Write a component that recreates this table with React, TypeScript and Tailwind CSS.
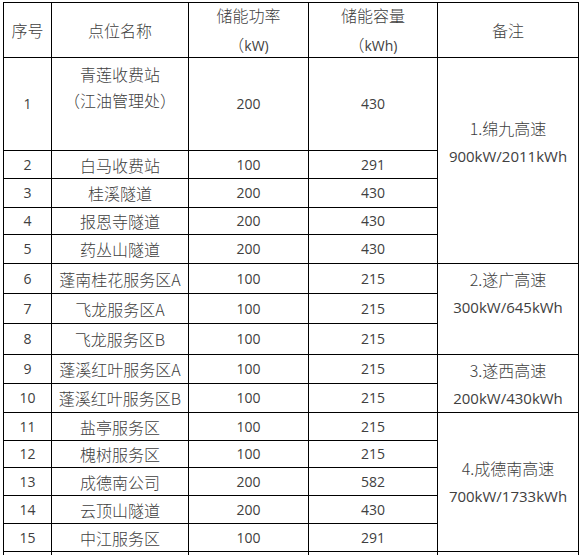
type Row = {
  no: string;
  name: string[];
  power: string;
  capacity: string;
  h: string;
};

type Group = { start: number; span: number; title: string; total: string; pad: string };

const ROWS: Row[] = [
  { no: "1", name: ["青莲收费站", "（江油管理处）"], power: "200", capacity: "430", h: "h-[93px]" },
  { no: "2", name: ["白马收费站"], power: "100", capacity: "291", h: "h-[28px]" },
  { no: "3", name: ["桂溪隧道"], power: "200", capacity: "430", h: "h-[29px]" },
  { no: "4", name: ["报恩寺隧道"], power: "200", capacity: "430", h: "h-[27px]" },
  { no: "5", name: ["药丛山隧道"], power: "200", capacity: "430", h: "h-[29px]" },
  { no: "6", name: ["蓬南桂花服务区A"], power: "100", capacity: "215", h: "h-[30px]" },
  { no: "7", name: ["飞龙服务区A"], power: "100", capacity: "215", h: "h-[30px]" },
  { no: "8", name: ["飞龙服务区B"], power: "100", capacity: "215", h: "h-[31px]" },
  { no: "9", name: ["蓬溪红叶服务区A"], power: "100", capacity: "215", h: "h-[29px]" },
  { no: "10", name: ["蓬溪红叶服务区B"], power: "100", capacity: "215", h: "h-[29px]" },
  { no: "11", name: ["盐亭服务区"], power: "100", capacity: "215", h: "h-[28px]" },
  { no: "12", name: ["槐树服务区"], power: "100", capacity: "215", h: "h-[27px]" },
  { no: "13", name: ["成德南公司"], power: "200", capacity: "582", h: "h-[28px]" },
  { no: "14", name: ["云顶山隧道"], power: "200", capacity: "430", h: "h-[28px]" },
  { no: "15", name: ["中江服务区"], power: "100", capacity: "291", h: "h-[28px]" },
];

const GROUPS: Group[] = [
  { start: 0, span: 5, title: "1.绵九高速", total: "900kW/2011kWh", pad: "pb-[37px]" },
  { start: 5, span: 3, title: "2.遂广高速", total: "300kW/645kWh", pad: "pb-[33px]" },
  { start: 8, span: 2, title: "3.遂西高速", total: "200kW/430kWh", pad: "pb-0" },
  { start: 10, span: 5, title: "4.成德南高速", total: "700kW/1733kWh", pad: "pb-0" },
];

const cell = "border border-black text-center align-middle p-0";
const latin = "font-['Open_Sans',sans-serif] text-[14px] font-normal";

export default function App() {
  return (
    <div className="h-[555px] w-[582px] overflow-hidden bg-white pl-[3px] pt-[2px] font-['Noto_Sans_CJK_SC',sans-serif] text-[16px] font-light leading-[24px] text-[#404040]">
      <table className="table-fixed border-collapse">
        <colgroup>
          <col className="w-[48px]" />
          <col className="w-[137px]" />
          <col className="w-[120px]" />
          <col className="w-[129px]" />
          <col className="w-[141px]" />
        </colgroup>
        <thead>
          <tr className="h-[55px]">
            <th className={`${cell} font-light`}>序号</th>
            <th className={`${cell} font-light`}>点位名称</th>
            <th className={`${cell} font-light leading-[26px]`}>
              <div className="-translate-y-[1px]">储能功率</div>
              <div className="translate-y-[2px]">
                （<span className={latin}>kW)</span>
              </div>
            </th>
            <th className={`${cell} font-light leading-[26px]`}>
              <div className="-translate-y-[1px]">储能容量</div>
              <div className="translate-y-[2px]">
                （<span className={latin}>kWh)</span>
              </div>
            </th>
            <th className={`${cell} font-light`}>备注</th>
          </tr>
        </thead>
        <tbody>
          {ROWS.map((row, i) => {
            const group = GROUPS.find((g) => g.start === i);
            return (
              <tr key={row.no} className={row.h}>
                <td className={`${cell} ${latin}`}>{row.no}</td>
                <td className={`${cell} ${row.name.length > 1 ? "align-top pt-[3px] leading-[26px]" : ""}`}>
                  {row.name.map((n) => (
                    <div key={n}>{n}</div>
                  ))}
                </td>
                <td className={`${cell} ${latin}`}>{row.power}</td>
                <td className={`${cell} ${latin}`}>{row.capacity}</td>
                {group && (
                  <td rowSpan={group.span} className={`${cell} leading-[28px]`}>
                    <div className={group.pad}>
                      <div>{group.title}</div>
                      <div className={`${latin} text-[15px]`}>{group.total}</div>
                    </div>
                  </td>
                )}
              </tr>
            );
          })}
          <tr className="h-[28px]">
            <td className={cell}></td>
            <td className={cell}></td>
            <td className={cell}></td>
            <td className={cell}></td>
            <td className={cell}></td>
          </tr>
        </tbody>
      </table>
    </div>
  );
}
